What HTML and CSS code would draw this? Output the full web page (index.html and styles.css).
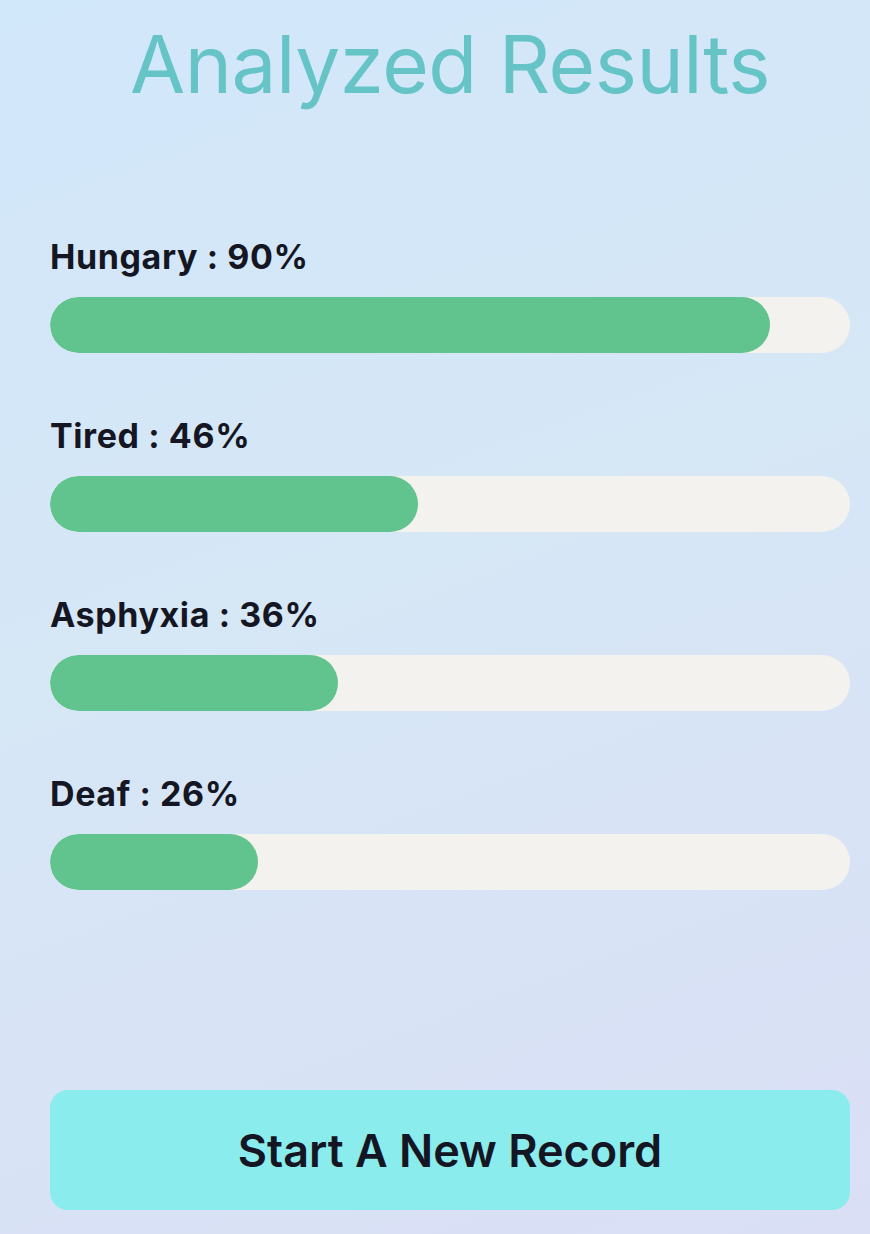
FILE: index.html
```html
<!DOCTYPE html>
<html lang="en">
<head>
<meta charset="utf-8">
<title>Analyzed Results</title>
<link rel="stylesheet" href="styles.css">
</head>
<body>
<main class="page">
  <h1 class="title">Analyzed Results</h1>
  <section class="results">
    <div class="result">
      <div class="label">Hungary : 90%</div>
      <div class="track"><div class="fill" style="width:90%"></div></div>
    </div>
    <div class="result">
      <div class="label">Tired : 46%</div>
      <div class="track"><div class="fill" style="width:46%"></div></div>
    </div>
    <div class="result">
      <div class="label">Asphyxia : 36%</div>
      <div class="track"><div class="fill" style="width:36%"></div></div>
    </div>
    <div class="result">
      <div class="label">Deaf : 26%</div>
      <div class="track"><div class="fill" style="width:26%"></div></div>
    </div>
  </section>
  <button class="new-record">Start A New Record</button>
</main>
</body>
</html>
```
FILE: styles.css
```css
html, body {
  margin: 0;
  padding: 0;
  height: 100%;
}
body {
  background: linear-gradient(160deg, #d1e7fa 0%, #d6e7f6 45%, #dadff5 100%);
  font-family: Inter, "Noto Sans", sans-serif;
  color: #151623;
}
.page {
  box-sizing: border-box;
  height: 1234px;
  padding: 0 20px 24px 50px;
  display: flex;
  flex-direction: column;
}
.title {
  margin: 14px 0 0 0;
  text-align: center;
  font-weight: 400;
  font-size: 80px;
  line-height: 100px;
  color: #66c4c6;
  letter-spacing: -0.5px;
}
.results {
  margin-top: 123px;
  display: flex;
  flex-direction: column;
  gap: 63px;
}
.result {
  display: flex;
  flex-direction: column;
  gap: 20px;
}
.label {
  font-size: 34px;
  font-weight: 700;
  line-height: 40px;
  letter-spacing: 0.6px;
}
.track {
  height: 56px;
  border-radius: 28px;
  background: #f3f2ef;
  overflow: hidden;
}
.fill {
  height: 100%;
  border-radius: 28px;
  background: #61c38e;
}
.new-record {
  margin-top: auto;
  height: 120px;
  border: none;
  border-radius: 18px;
  background: #8aeced;
  font-family: Inter, "Noto Sans", sans-serif;
  font-size: 45px;
  font-weight: 600;
  color: #151623;
  cursor: pointer;
}
```
